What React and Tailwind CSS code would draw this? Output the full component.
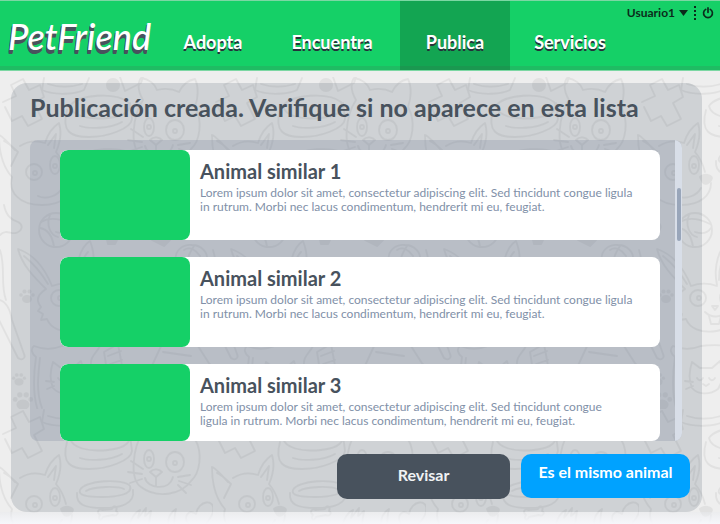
const LOREM =
  'Lorem ipsum dolor sit amet, consectetur adipiscing elit. Sed tincidunt congue ligula in rutrum. Morbi nec lacus condimentum, hendrerit mi eu, feugiat.';

const animals = [
  { name: 'Animal similar 1', size: 'h-[90px]', text: 'max-w-[440px]' },
  { name: 'Animal similar 2', size: 'h-[90px]', text: 'max-w-[440px]' },
  { name: 'Animal similar 3', size: 'h-[77px]', text: 'max-w-[420px]' },
];

const links = [
  { label: 'Adopta', box: 'w-[102px]' },
  { label: 'Encuentra', box: 'w-[136px]' },
  { label: 'Publica', box: 'w-[110px] bg-[#13a552] shadow-[inset_0_-4px_0_#1a9850]', current: true },
  { label: 'Servicios', box: 'w-[120px]' },
];

function Paw({ x, y, s = 1 }) {
  return (
    <g transform={`translate(${x} ${y}) scale(${s})`} fill="#000" stroke="none">
      <ellipse cx="0" cy="2" rx="5" ry="4" />
      <circle cx="-6" cy="-2" r="1.8" />
      <circle cx="-2.5" cy="-5.5" r="2" />
      <circle cx="2.5" cy="-5.5" r="2" />
      <circle cx="6" cy="-2" r="1.8" />
    </g>
  );
}

function PetShapes() {
  return (
    <>
      {/* cross */}
      <path d="M3 102l13-6-5-11 12-6 6 11 11-5 4 12-10 6 8 16-14 7-6-10-10 5-7-14" />
      {/* big bowl */}
      <path d="M70 106c8-12 46-14 58-4 4 6 0 14-20 16s-36-2-38-12zM67 110c-6 22 4 27 22 27s42-8 43-18l-2-16M80 126c8 3 30 3 42-4" />
      {/* tray and dot */}
      <path d="M44 78l-2 12c14 6 34 4 42 0l5-12M48 84c12 4 24 3 34 0" />
      <circle cx="113" cy="85" r="7" fill="#000" stroke="none" />
      <path d="M120 77l5 14 16-8 2-6" />
      {/* cat */}
      <path d="M143 100c-6-10-5-18-2-22 8 1 14 6 16 12 8-2 16-1 22 2 4-8 10-12 16-13 4 8 3 20 0 28 8 14 5 34-4 42-10 14-34 18-50 6-12-8-8-40 2-55z" />
      <ellipse cx="149" cy="127" rx="5" ry="9" />
      <circle cx="149" cy="127" r="2" />
      <ellipse cx="175" cy="130" rx="9" ry="10" />
      <circle cx="175" cy="131" r="2" />
      <path d="M150 140c4-4 9-3 12 0l-6 5zM156 145v9M145 146c2 10 24 14 28-1M143 137l-12-8M142 142l-14-2M142 147l-12 4M178 145l12-2M179 149l12 4M178 153l8 8" />
      {/* dog */}
      <path d="M15 150c-7-7-12-14-16-15 0 18 4 32 13 42-4 14 6 28 30 28 20 0 30-10 30-22M20 146c8-5 16-6 25-3 3-10 8-16 14-20 3 10 1 20-3 29 5 6 8 12 10 20M4 141c6 3 10 7 14 11l-7 14M48 145l8-11-2 14M38 196c8 4 20 0 24-8" />
      <circle cx="34" cy="172" r="8" />
      <circle cx="35" cy="173" r="2" />
      <ellipse cx="55" cy="165" rx="5" ry="9" />
      <circle cx="55" cy="166" r="2" />
      <path d="M61 177c4-4 11-2 12 1-2 6-8 8-10 3z" fill="#000" />
      {/* small bowl and bone */}
      <path d="M80 158c4-10 44-12 50-4 3 8-12 11-28 11s-24-2-22-7zM77 161c-1 12 8 15 26 15s32-4 30-18M86 159c8-5 32-5 38-2" />
      <path d="M100 183c-4-3-1-7 2-5l10-1c2-5 6-2 4 2 4 2 0 6-3 4l-10 2c-2 5-6 2-3-2z" />
      {/* grass, heart */}
      <path d="M130 192c2-8 6-12 10-14l-2 8 8-10-1 8 6-5-2 13M168 192c0-8 3-12 8-15-2 6-1 10-2 15M190 194c-8-8-2-18 6-12 2-14 20-16 17-2-2 8-9 13-14 20" />
      {/* paw and feather in the middle */}
      <path d="M4 205c2 10 6 14 14 17 6 3 4 9-2 11-6 1-10-4-16 2M207 205c4 2 5 14 6 20" />
      {/* ball */}
      <circle cx="56" cy="230" r="17" />
      <path d="M41 222c10-6 22-2 30 2M54 247c-2-14-8-18-14-19M56 232c6 2 12 2 16-4M50 215c-4 10 0 20 8 22" />
      <path d="M107 240h10l-2 4h-7zM152 240l12 6 6-6" fill="#000" />
      {/* rabbit */}
      <path d="M46 289c-12-12-24-24-28-40 18 6 28 22 34 37M24 256c10 8 18 18 24 28M78 285c-4-18 2-38 12-44 6 14 4 32-1 46M80 280c0-14 4-24 8-28M46 289c-12 8-8 14-5 18l-3 4 5 3-2 6 6-1c8 20 46 14 50-2 6-12 0-26-10-32M52 286c8-3 18-3 26 0" />
      <circle cx="59" cy="298" r="8" />
      <circle cx="60" cy="298" r="2" />
      <ellipse cx="87" cy="298" rx="6" ry="8" />
      <path d="M66 312c6 6 16 6 20 0M73 306l6 0-3 4zM70 316l2 8 8 0 2-8" />
      <Paw x={27} y={297} />
      {/* helmet ball, long brush */}
      <path d="M176 260c-2-10 8-16 16-15 10 0 16 8 15 15M184 250c6-4 12 0 16 6M194 246c-4 6-6 10-6 14" />
      <path d="M0 250c6 18 0 34 6 50M-4 314l22 44c4 3 8 0 6-4l-12-34c-2-12-6-18-12-20M209 314l4 8" />
      {/* cushion with sleeping cat */}
      <path d="M34 346c10 4 18 4 28 0 14-2 26 0 38 0-4 8-10 10-9 20 2 18 2 34 8 54-12 2-40 0-58 3-6-2-6-8-3-12-6-18-4-40-2-54-4-3-6-8-2-11zM40 358c-2 18-4 34 2 50" />
      <path d="M53 388c-4-10-2-20 0-26l8 6h12l8-7c4 12 2 22-2 28-8 6-20 6-26-1zM58 378c2 3 4 3 6 0M70 378c2 3 4 3 6 0M64 384l3 2 3-2M54 382l-8-1M54 386l-7 3" />
      {/* tube and box */}
      <path d="M104 352l14-8 10 54-16 4zM108 356l13-5M110 364l12-4M150 370l12-26 36 2 14 22-18 34-36-4zM154 368l42 2 14-6M163 352l28 4M196 370l2 30" />
      <Paw x={19} y={380} s={0.9} />
      <Paw x={23} y={402} s={1.3} />
    </>
  );
}

function PetPattern() {
  return (
    <svg className="absolute inset-0 h-full w-full" aria-hidden="true">
      <defs>
        <pattern id="pets" width="213" height="332" patternUnits="userSpaceOnUse" patternTransform="translate(0 6)">
          <g transform="translate(0 -77)" fill="none" stroke="#000" strokeWidth="1.8" strokeLinecap="round" strokeLinejoin="round" opacity="0.055">
            <PetShapes />
            <g transform="translate(213 0)">
              <PetShapes />
            </g>
          </g>
        </pattern>
      </defs>
      <rect y="6" width="100%" height="100%" fill="url(#pets)" />
    </svg>
  );
}

function Header() {
  return (
    <header className="relative flex h-[71px] border-y border-[#7cd7a3] bg-[#15d067] shadow-[inset_0_-4px_0_#1fbc63]">
      <a href="#inicio" className="flex w-[162px] shrink-0 items-center pl-2 text-4xl leading-10 font-medium text-white italic [text-shadow:-1px_2px_0_#48525d,-1px_3px_0_#48525d,-1px_4px_0_#48525d]">
        PetFriend
      </a>
      <nav className="flex">
        {links.map((link) => (
          <a
            key={link.label}
            href={`#${link.label.toLowerCase()}`}
            aria-current={link.current ? 'page' : undefined}
            className={`flex items-center justify-center pt-3 text-lg font-bold text-white [text-shadow:0_2px_0_#24313a] ${link.box}`}
          >
            {link.label}
          </a>
        ))}
      </nav>
      <div className="absolute top-1 right-1.5 flex h-4 items-center gap-1 text-xs font-bold text-[#0b2b1b]">
        <button type="button" className="flex items-center gap-1">
          Usuario1
          <svg width="9" height="6" viewBox="0 0 9 6" aria-hidden="true">
            <path d="M0 0h9L4.5 6z" fill="currentColor" />
          </svg>
        </button>
        <svg className="mx-0.5" width="2" height="14" viewBox="0 0 2 14" aria-hidden="true">
          <path d="M1 0v14" stroke="currentColor" strokeWidth="2" strokeDasharray="2 2" />
        </svg>
        <button type="button" aria-label="Salir">
          <svg width="12" height="12" viewBox="0 0 13 13" fill="none" stroke="currentColor" strokeWidth="1.8" strokeLinecap="round" aria-hidden="true">
            <path d="M4 2.6a4.8 4.8 0 1 0 5 0M6.500 1v5" />
          </svg>
        </button>
      </div>
    </header>
  );
}

function AnimalCard({ animal }) {
  return (
    <li className={`flex overflow-hidden rounded-lg bg-white ${animal.size}`}>
      <div className="w-[130px] shrink-0 rounded-lg bg-[#15d067]" />
      <div className="px-[10px] pt-[9px]">
        <h2 className="text-xl leading-6 font-bold text-[#48525d]">{animal.name}</h2>
        <p className={`pt-[3px] text-xs leading-[14px] text-[#8190a8] ${animal.text}`}>{LOREM}</p>
      </div>
    </li>
  );
}

export default function App() {
  return (
    <div className="flex min-h-screen flex-col bg-[#eee] font-['Lato','Open_Sans',sans-serif]">
      <Header />
      <main className="relative flex-1 overflow-hidden pt-3 pr-[18px] pb-3 pl-[11px]">
        <PetPattern />
        <div className="absolute inset-x-0 bottom-0 h-3 bg-linear-to-b from-[#e8eaee]/40 to-[#f6f7fb]" />
        <section className="relative rounded-2xl bg-[#435262]/18 pt-2 pr-3 pb-[13px] pl-[19px]">
          <h1 className="text-[25px] leading-8 font-bold text-[#48525d]">
            Publicación creada. Verifique si no aparece en esta lista
          </h1>
          <div className="mt-[17px] mr-2 flex overflow-hidden rounded-lg bg-[#76859b]/25">
            <ul className="flex flex-1 flex-col gap-[17px] pt-[10px] pr-[15px] pl-[30px]">
              {animals.map((animal) => (
                <AnimalCard key={animal.name} animal={animal} />
              ))}
            </ul>
            <div className="w-[7px] bg-[#d8dee8] pt-12 pr-px pl-[2px]">
              <div className="h-[53px] rounded bg-[#99a6ba]" />
            </div>
          </div>
          <div className="mt-[13px] flex items-start justify-end gap-[11px]">
            <button type="button" className="h-[45px] w-[173px] rounded-[10px] bg-[#48525d] pb-1 text-base font-bold text-[#f0f2f4]">
              Revisar
            </button>
            <button type="button" className="h-11 w-[169px] rounded-[10px] bg-[#00a2ff] pb-2 text-base font-bold text-white">
              Es el mismo animal
            </button>
          </div>
        </section>
      </main>
    </div>
  );
}
